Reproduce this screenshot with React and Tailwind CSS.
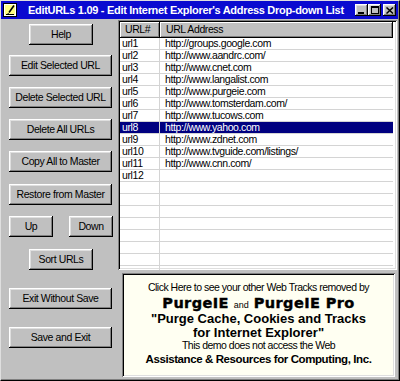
import React from "react";

const sans = "font-['Liberation_Sans',Arial,sans-serif]";
const raised =
  "shadow-[inset_-1px_-1px_#000000,inset_1px_1px_#ffffff,inset_-2px_-2px_#808080,inset_2px_2px_#dfdfdf]";
const headRaised =
  "shadow-[inset_-1px_-1px_#000000,inset_1px_1px_#ffffff,inset_-2px_-2px_#808080]";
const sunken =
  "shadow-[inset_1px_1px_#808080,inset_-1px_-1px_#ffffff,inset_2px_2px_#000000,inset_-2px_-2px_#dfdfdf]";

const urls = [
  ["url1", "http://groups.google.com"],
  ["url2", "http://www.aandrc.com/"],
  ["url3", "http://www.cnet.com"],
  ["url4", "http://www.langalist.com"],
  ["url5", "http://www.purgeie.com"],
  ["url6", "http://www.tomsterdam.com/"],
  ["url7", "http://www.tucows.com"],
  ["url8", "http://www.yahoo.com"],
  ["url9", "http://www.zdnet.com"],
  ["url10", "http://www.tvguide.com/listings/"],
  ["url11", "http://www.cnn.com/"],
  ["url12", ""],
  ["", ""],
  ["", ""],
  ["", ""],
  ["", ""],
  ["", ""],
  ["", ""],
  ["", ""],
  ["", ""],
];

function Button({ children, className = "" }) {
  return (
    <button
      type="button"
      className={`flex items-center justify-center h-[21px] bg-[#c0c0c0] text-[10.5px] tracking-[-0.4px] text-black whitespace-nowrap ${raised} ${className}`}
    >
      {children}
    </button>
  );
}

function TitleButton({ children, className = "" }) {
  return (
    <div className={`flex items-center justify-center w-[13px] h-[12px] bg-[#c0c0c0] ${raised} ${className}`}>
      {children}
    </div>
  );
}

function AppIcon() {
  return (
    <svg width="14" height="14" viewBox="0 0 14 14">
      <rect x="0.5" y="0.5" width="13" height="13" fill="#ffffff" stroke="#000000" />
      <rect x="2" y="2" width="10" height="10" fill="#ffff80" />
      <path d="M11 2.5 L6 9.5" stroke="#000000" strokeWidth="1.6" />
      <path d="M5.5 10 L4.5 11.5 M3 11.5 H11" stroke="#000000" strokeWidth="1" />
    </svg>
  );
}

export default function App() {
  return (
    <div
      className={`w-[400px] h-[381px] bg-[#c0c0c0] flex flex-col overflow-hidden border-t border-l border-t-[#dfdfdf] border-l-[#dfdfdf] border-r border-b border-r-black border-b-black shadow-[inset_-1px_-1px_#808080] ${sans}`}
    >
      {/* title bar */}
      <div className="h-[18px] w-[397px] bg-[#0a0ad0] flex items-center pl-[2px] pr-[2px] shrink-0">
        <AppIcon />
        <span className="ml-[11px] text-white font-bold text-[11px] tracking-[-0.3px] leading-none whitespace-nowrap">
          EditURLs 1.09 - Edit Internet Explorer's Address Drop-down List
        </span>
        <div className="ml-auto flex items-center">
          <TitleButton>
            <svg width="7" height="7" viewBox="0 0 7 7">
              <rect x="0" y="5" width="6" height="2" fill="#000" />
            </svg>
          </TitleButton>
          <TitleButton>
            <svg width="8" height="8" viewBox="0 0 8 8">
              <rect x="0.5" y="0.5" width="7" height="7" fill="none" stroke="#000" />
              <rect x="0" y="0" width="8" height="2" fill="#000" />
            </svg>
          </TitleButton>
          <TitleButton className="ml-[2px]">
            <svg width="8" height="7" viewBox="0 0 8 7">
              <path d="M0.5 0.5 L7 6.5 M7 0.5 L0.5 6.5" stroke="#000" strokeWidth="1.5" />
            </svg>
          </TitleButton>
        </div>
      </div>

      <div className="flex flex-1">
        {/* left buttons */}
        <div className="w-[117px] flex flex-col shrink-0">
          <Button className="mt-[5px] ml-[28px] w-[64px]">Help</Button>
          <Button className="mt-[10px] ml-[8px] w-[103px]">Edit Selected URL</Button>
          <Button className="mt-[11px] ml-[8px] w-[103px]">Delete Selected URL</Button>
          <Button className="mt-[11px] ml-[8px] w-[103px]">Delete All URLs</Button>
          <Button className="mt-[11px] ml-[8px] w-[103px]">Copy All to Master</Button>
          <Button className="mt-[12px] ml-[8px] w-[103px]">Restore from Master</Button>
          <div className="mt-[11px] ml-[8px] w-[104px] flex justify-between">
            <Button className="w-[44px]">Up</Button>
            <Button className="w-[44px]">Down</Button>
          </div>
          <Button className="mt-[12px] ml-[28px] w-[64px]">Sort URLs</Button>
          <Button className="mt-[18px] ml-[8px] w-[103px]">Exit Without Save</Button>
          <Button className="mt-[18px] ml-[8px] w-[103px]">Save and Exit</Button>
        </div>

        {/* right side */}
        <div className="flex flex-col">
          <div className={`mt-[1px] w-[279px] h-[250px] bg-white p-[2px] overflow-hidden ${sunken}`}>
            <div className="pr-[2px] text-[10.5px] tracking-[-0.4px] text-black">
              <div className="flex h-[16px]">
                <div className={`w-[40px] bg-[#c0c0c0] flex items-center pl-[5px] ${headRaised}`}>URL#</div>
                <div className={`flex-1 bg-[#c0c0c0] flex items-center pl-[6px] ${headRaised}`}>URL Address</div>
              </div>
              {urls.map(([id, url], i) => {
                const sel = i === 7;
                return (
                  <div
                    key={i}
                    className={`flex h-[12px] border-b border-[#d4d4d4] leading-[11px] ${sel ? "bg-[#000080] text-white" : ""}`}
                  >
                    <div className="w-[40px] border-r border-[#d4d4d4] pl-[2px] whitespace-nowrap">{id}</div>
                    <div className="flex-1 pl-[5px] whitespace-nowrap">{url}</div>
                  </div>
                );
              })}
            </div>
          </div>

          <div
            className={`mt-[3px] ml-[4px] w-[273px] h-[104px] bg-[#fffff2] p-[2px] pt-[7px] flex flex-col items-center text-black ${sunken}`}
          >
            <div className="h-[14px] leading-[14px] text-[10.5px] tracking-[-0.5px] whitespace-nowrap">
              Click Here to see your other Web Tracks removed by
            </div>
            <div className="h-[18px] flex items-baseline whitespace-nowrap">
              <span className="font-['DejaVu_Sans',sans-serif] font-bold text-[14.5px] tracking-[0.4px] leading-[18px] [-webkit-text-stroke:0.4px_black]">
                PurgeIE
              </span>
              <span className="mx-[5px] text-[9px]">and</span>
              <span className="font-['DejaVu_Sans',sans-serif] font-bold text-[14.5px] tracking-[0.4px] leading-[18px] [-webkit-text-stroke:0.4px_black]">
                PurgeIE Pro
              </span>
            </div>
            <div className="h-[14px] leading-[14px] font-bold text-[13px] whitespace-nowrap">
              "Purge Cache, Cookies and Tracks
            </div>
            <div className="h-[13px] leading-[13px] font-bold text-[13px] whitespace-nowrap">
              for Internet Explorer"
            </div>
            <div className="h-[13px] leading-[13px] text-[10.5px] tracking-[-0.5px] whitespace-nowrap">
              This demo does not access the Web
            </div>
            <div className="h-[14px] leading-[14px] font-bold text-[11.5px] tracking-[-0.4px] whitespace-nowrap">
              Assistance &amp; Resources for Computing, Inc.
            </div>
          </div>
        </div>
      </div>
    </div>
  );
}
